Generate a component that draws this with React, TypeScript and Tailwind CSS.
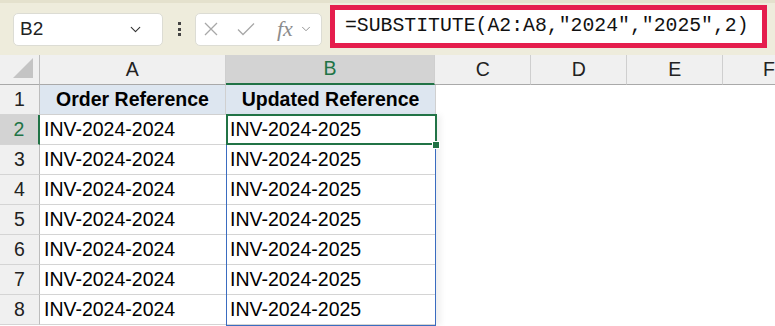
import React from 'react';
import { ChevronDown } from 'lucide-react';

const rows = [2, 3, 4, 5, 6, 7, 8];

const Toolbar: React.FC = () => (
  <div className="h-[55px] bg-[#eeecdc] border-t-[3px] border-[#e4e1cd] flex items-center relative">
    {/* name box */}
    <div className="ml-[13px] w-[150px] h-[33px] bg-white rounded-[5px] border border-[#dcdcd4] flex items-center justify-between pl-[6px] pr-[18px] text-[19px] text-[#222]">
      <span>B2</span>
      <ChevronDown className="w-[17px] h-[17px] text-[#333]" strokeWidth={1.6} />
    </div>
    {/* grip dots */}
    <div className="w-[32px] flex flex-col items-center gap-[2.5px]">
      <span className="w-[3px] h-[3px] bg-[#444]" />
      <span className="w-[3px] h-[3px] bg-[#444]" />
      <span className="w-[3px] h-[3px] bg-[#444]" />
    </div>
    {/* fx box */}
    <div className="w-[127px] h-[33px] bg-white rounded-[5px] border border-[#dcdcd4] flex items-center pl-[8px] gap-[0px] text-[#9a9a9a]">
      <svg width="14" height="14" viewBox="0 0 14 14" className="mr-[19px]">
        <path d="M1 1 L13 13 M13 1 L1 13" stroke="#a8a8a8" strokeWidth="1.3" fill="none" />
      </svg>
      <svg width="18" height="14" viewBox="0 0 18 14" className="mr-[22px]">
        <path d="M1 7.5 L6 12.5 L17 1.5" stroke="#a8a8a8" strokeWidth="1.3" fill="none" />
      </svg>
      <span className="text-[22px] italic text-[#8c8c8c] leading-none mr-[6px]" style={{ fontFamily: '"Liberation Serif", serif' }}>fx</span>
      <ChevronDown className="w-[14px] h-[14px] text-[#8c8c8c]" strokeWidth={1.6} />
    </div>
    {/* formula box */}
    <div className="ml-[8px] mt-[-5px] w-[437px] h-[43px] bg-white border-[5px] border-[#e51e4d] flex items-center pl-[10px] text-[19.8px] text-[#111]" style={{ fontFamily: '"Liberation Mono", monospace' }}>
      =SUBSTITUTE(A2:A8,"2024","2025",2)
    </div>
  </div>
);

const ColHead: React.FC<{ label: string; w: string; active?: boolean }> = ({ label, w, active }) => (
  <div
    className={`${w} h-[30px] flex items-center justify-center border-r border-[#cfcfcf] ${
      active ? 'bg-[#d3d3d3] text-[#217346] border-b-2 border-b-[#217346]' : 'border-b border-b-[#a9a9a9] text-[#222]'
    }`}
  >
    {label}
  </div>
);

export default function App() {
  return (
    <div className="w-[775px] h-[326px] overflow-hidden bg-white" style={{ fontFamily: '"Liberation Sans", Arial, sans-serif' }}>
      <Toolbar />
      <div className="text-[19.5px]">
        {/* column headers */}
        <div className="flex bg-[#f0f0f0]">
          <div className="w-[40px] h-[30px] border-r border-b border-[#bdbdbd] border-b-[#a9a9a9] relative">
            <svg width="24" height="24" viewBox="0 0 24 24" className="absolute right-[4px] bottom-[4px]">
              <path d="M22 2 L22 22 L2 22 Z" fill="#c4c4c4" />
            </svg>
          </div>
          <ColHead label="A" w="w-[186px]" />
          <ColHead label="B" w="w-[210px]" active />
          <ColHead label="C" w="w-[96px]" />
          <ColHead label="D" w="w-[96px]" />
          <ColHead label="E" w="w-[96px]" />
          <div className="flex-1 h-[30px] border-b border-b-[#a9a9a9] pl-[40px] flex items-center text-[#222]">F</div>
        </div>

        {/* row 1 */}
        <div className="flex">
          <div className="w-[40px] h-[30px] bg-[#f0f0f0] border-r border-r-[#bdbdbd] border-b border-b-[#d4d4d4] flex items-center justify-center text-[#222]">1</div>
          <div className="w-[186px] h-[30px] bg-[#dde6f0] border-r border-b border-[#d0d0d0] flex items-center justify-center font-bold text-black">Order Reference</div>
          <div className="w-[210px] h-[30px] bg-[#dde6f0] border-r border-b border-[#d0d0d0] flex items-center justify-center font-bold text-black">Updated Reference</div>
        </div>

        {/* rows 2-8 */}
        <div className="flex">
          <div className="flex flex-col">
            {rows.map(r => (
              <div
                key={r}
                className={`w-[40px] h-[30px] flex items-center justify-center border-b border-b-[#d4d4d4] ${
                  r === 2 ? 'bg-[#d3d3d3] text-[#217346] border-r-2 border-r-[#217346]' : 'bg-[#f0f0f0] text-[#222] border-r border-r-[#bdbdbd]'
                }`}
              >
                {r}
              </div>
            ))}
          </div>
          <div className="flex flex-col">
            {rows.map(r => (
              <div key={r} className="w-[186px] h-[30px] border-b border-[#d4d4d4] flex items-center pl-[4px] text-black">
                INV-2024-2024
              </div>
            ))}
          </div>
          <div className="relative flex flex-col w-[210px] border border-t-0 border-[#3a6cc0] shadow-[5px_0_6px_rgba(0,0,0,0.06)]">
            {rows.map(r => (
              <div key={r} className="h-[30px] border-b border-[#d4d4d4] last:border-b-0 flex items-center pl-[3px] text-black">
                INV-2024-2025
              </div>
            ))}
            {/* active cell */}
            <div className="absolute left-[-1px] top-[-1px] w-[211px] h-[31px] border-2 border-[#217346]" />
            <div className="absolute left-[205px] top-[26px] w-[8px] h-[8px] bg-[#217346] border border-white" />
          </div>
        </div>
      </div>
    </div>
  );
}
